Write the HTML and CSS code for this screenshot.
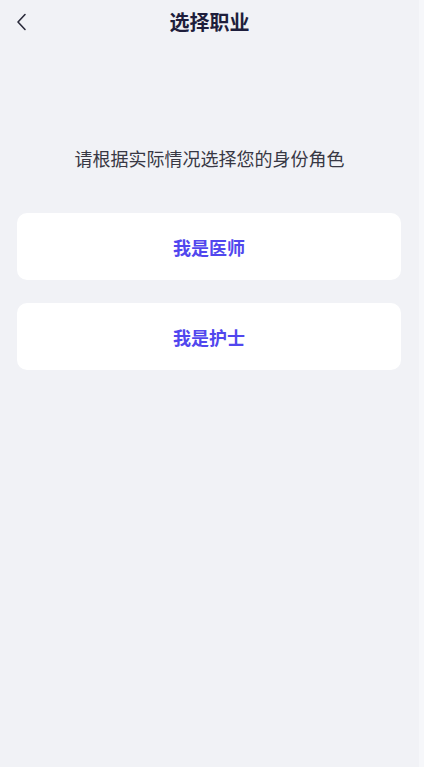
FILE: index.html
```html
<!DOCTYPE html>
<html lang="zh">
<head>
<meta charset="utf-8">
<link rel="stylesheet" href="styles.css">
</head>
<body>
<div class="page">
  <header class="nav">
    <span class="back">
      <svg width="12" height="18" viewBox="0 0 12 18"><path d="M9 1.5 L2 9 L9 16.5" fill="none" stroke="#2a2a3a" stroke-width="1.6" stroke-linecap="round" stroke-linejoin="round"/></svg>
    </span>
    <h1 class="title">选择职业</h1>
  </header>
  <p class="hint">请根据实际情况选择您的身份角色</p>
  <div class="options">
    <div class="card">我是医师</div>
    <div class="card">我是护士</div>
  </div>
</div>
</body>
</html>
```
FILE: styles.css
```css
* { box-sizing: border-box; }
html, body { margin: 0; padding: 0; }
body {
  background: #f6f7fa;
  font-family: "Noto Sans CJK SC", "Noto Sans", sans-serif;
  height: 767px;
}
.page {
  width: 419px;
  height: 767px;
  background: #f1f2f6;
}
.nav {
  position: relative;
  height: 44px;
  display: flex;
  align-items: center;
  justify-content: center;
}
.back {
  position: absolute;
  left: 16px;
  top: 13px;
  width: 12px;
  height: 18px;
  display: flex;
}
.title {
  margin: 0;
  font-size: 20px;
  font-weight: 600;
  color: #1e1e3c;
  line-height: 44px;
}
.hint {
  margin: 101px 0 0;
  text-align: center;
  font-size: 18px;
  line-height: 26px;
  color: #383844;
}
.options {
  margin: 42px 18px 0 17px;
  display: flex;
  flex-direction: column;
  gap: 23px;
}
.card {
  height: 67px;
  background: #ffffff;
  border-radius: 10px;
  display: flex;
  align-items: center;
  justify-content: center;
  font-size: 18px;
  font-weight: 600;
  color: #5147ee;
}
```
